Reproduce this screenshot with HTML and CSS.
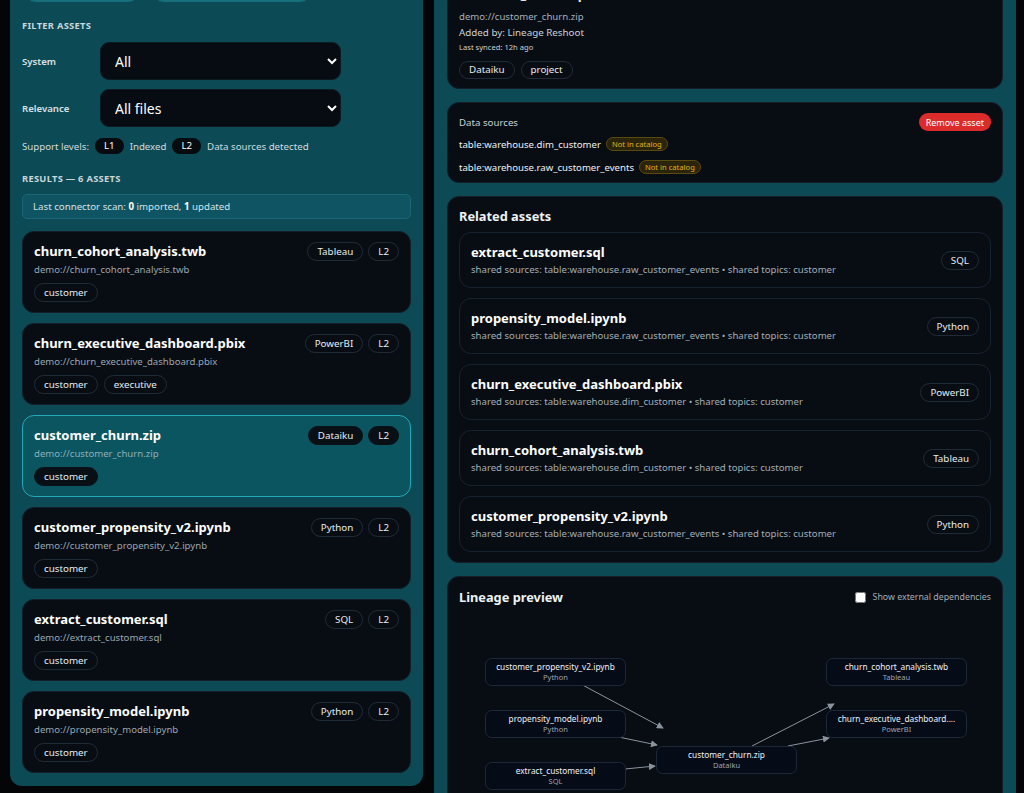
FILE: index.html
```html
<!DOCTYPE html>
<html lang="en">
<head>
  <meta charset="UTF-8">
  <title>Asset catalog</title>
  <link rel="stylesheet" href="styles.css">
</head>
<body>

  <div class="layout">

    <aside class="panel left">
      <div class="actions">
        <button class="pill-btn">Scan connectors</button>
        <button class="pill-btn wide">Import from catalog</button>
      </div>

      <h3 class="section-label">Filter assets</h3>
      <div class="field">
        <label for="system">System</label>
        <select id="system"><option>All</option></select>
      </div>
      <div class="field">
        <label for="relevance">Relevance</label>
        <select id="relevance"><option>All files</option></select>
      </div>
      <div class="levels">
        Support levels: <span class="lvl">L1</span> Indexed <span class="lvl">L2</span> Data sources detected
      </div>

      <h3 class="section-label results">Results — 6 assets</h3>
      <div class="scan-note">Last connector scan: <b>0</b> imported, <b>1</b> updated</div>

      <div class="asset-list">
        <div class="asset">
          <div class="asset-head">
            <span class="asset-name">churn_cohort_analysis.twb</span>
            <span class="badges"><span class="badge">Tableau</span><span class="badge">L2</span></span>
          </div>
          <div class="asset-path">demo://churn_cohort_analysis.twb</div>
          <div class="tags"><span class="tag">customer</span></div>
        </div>
        <div class="asset">
          <div class="asset-head">
            <span class="asset-name">churn_executive_dashboard.pbix</span>
            <span class="badges"><span class="badge">PowerBI</span><span class="badge">L2</span></span>
          </div>
          <div class="asset-path">demo://churn_executive_dashboard.pbix</div>
          <div class="tags"><span class="tag">customer</span><span class="tag">executive</span></div>
        </div>
        <div class="asset selected">
          <div class="asset-head">
            <span class="asset-name">customer_churn.zip</span>
            <span class="badges"><span class="badge">Dataiku</span><span class="badge">L2</span></span>
          </div>
          <div class="asset-path">demo://customer_churn.zip</div>
          <div class="tags"><span class="tag">customer</span></div>
        </div>
        <div class="asset">
          <div class="asset-head">
            <span class="asset-name">customer_propensity_v2.ipynb</span>
            <span class="badges"><span class="badge">Python</span><span class="badge">L2</span></span>
          </div>
          <div class="asset-path">demo://customer_propensity_v2.ipynb</div>
          <div class="tags"><span class="tag">customer</span></div>
        </div>
        <div class="asset">
          <div class="asset-head">
            <span class="asset-name">extract_customer.sql</span>
            <span class="badges"><span class="badge">SQL</span><span class="badge">L2</span></span>
          </div>
          <div class="asset-path">demo://extract_customer.sql</div>
          <div class="tags"><span class="tag">customer</span></div>
        </div>
        <div class="asset">
          <div class="asset-head">
            <span class="asset-name">propensity_model.ipynb</span>
            <span class="badges"><span class="badge">Python</span><span class="badge">L2</span></span>
          </div>
          <div class="asset-path">demo://propensity_model.ipynb</div>
          <div class="tags"><span class="tag">customer</span></div>
        </div>
      </div>
    </aside>

    <main class="panel right">
      <section class="card detail">
        <h2 class="detail-title">customer_churn.zip</h2>
        <div class="detail-path">demo://customer_churn.zip</div>
        <div class="detail-added">Added by: Lineage Reshoot</div>
        <div class="detail-synced">Last synced: 12h ago</div>
        <div class="tags detail-tags"><span class="tag">Dataiku</span><span class="tag">project</span></div>
      </section>

      <section class="card sources">
        <div class="sources-head">
          <span>Data sources</span>
          <button class="danger">Remove asset</button>
        </div>
        <div class="source">table:warehouse.dim_customer <span class="warn">Not in catalog</span></div>
        <div class="source">table:warehouse.raw_customer_events <span class="warn">Not in catalog</span></div>
      </section>

      <section class="card related-card">
        <h3 class="card-title">Related assets</h3>
        <div class="related-list">
          <div class="related">
            <div>
              <div class="related-name">extract_customer.sql</div>
              <div class="related-meta">shared sources: table:warehouse.raw_customer_events • shared topics: customer</div>
            </div>
            <span class="badge">SQL</span>
          </div>
          <div class="related">
            <div>
              <div class="related-name">propensity_model.ipynb</div>
              <div class="related-meta">shared sources: table:warehouse.raw_customer_events • shared topics: customer</div>
            </div>
            <span class="badge">Python</span>
          </div>
          <div class="related">
            <div>
              <div class="related-name">churn_executive_dashboard.pbix</div>
              <div class="related-meta">shared sources: table:warehouse.dim_customer • shared topics: customer</div>
            </div>
            <span class="badge">PowerBI</span>
          </div>
          <div class="related">
            <div>
              <div class="related-name">churn_cohort_analysis.twb</div>
              <div class="related-meta">shared sources: table:warehouse.dim_customer • shared topics: customer</div>
            </div>
            <span class="badge">Tableau</span>
          </div>
          <div class="related">
            <div>
              <div class="related-name">customer_propensity_v2.ipynb</div>
              <div class="related-meta">shared sources: table:warehouse.raw_customer_events • shared topics: customer</div>
            </div>
            <span class="badge">Python</span>
          </div>
        </div>
      </section>

      <section class="card lineage">
        <div class="lineage-head">
          <h3 class="card-title">Lineage preview</h3>
          <label class="check"><input type="checkbox"> Show external dependencies</label>
        </div>
        <svg class="graph" width="534" height="200" viewBox="0 0 534 200">
          <defs>
            <marker id="arrow" viewBox="0 0 8 8" refX="7" refY="4" markerWidth="7" markerHeight="7" orient="auto">
              <path d="M0 0 L8 4 L0 8 z" fill="#8a939e"/>
            </marker>
          </defs>
          <g class="edges">
            <line x1="123.5" y1="70" x2="204" y2="113"/>
            <line x1="159.5" y1="122" x2="198" y2="130"/>
            <line x1="166" y1="154" x2="196" y2="151"/>
            <line x1="293" y1="131" x2="375" y2="89"/>
            <line x1="329" y1="131" x2="370" y2="123"/>
          </g>
          <g class="node">
            <rect x="26.5" y="43.5" width="140" height="27" rx="6"/>
            <text class="n-label" x="96.5" y="55">customer_propensity_v2.ipynb</text>
            <text class="n-sub" x="96.5" y="65">Python</text>
          </g>
          <g class="node">
            <rect x="26.5" y="95.5" width="140" height="27" rx="6"/>
            <text class="n-label" x="96.5" y="107">propensity_model.ipynb</text>
            <text class="n-sub" x="96.5" y="117">Python</text>
          </g>
          <g class="node">
            <rect x="26.5" y="147.5" width="140" height="27" rx="6"/>
            <text class="n-label" x="96.5" y="159">extract_customer.sql</text>
            <text class="n-sub" x="96.5" y="169">SQL</text>
          </g>
          <g class="node">
            <rect x="197.5" y="131.5" width="140" height="27" rx="6"/>
            <text class="n-label" x="267.5" y="143">customer_churn.zip</text>
            <text class="n-sub" x="267.5" y="153">Dataiku</text>
          </g>
          <g class="node">
            <rect x="367.5" y="43.5" width="140" height="27" rx="6"/>
            <text class="n-label" x="437.5" y="55">churn_cohort_analysis.twb</text>
            <text class="n-sub" x="437.5" y="65">Tableau</text>
          </g>
          <g class="node">
            <rect x="367.5" y="95.5" width="140" height="27" rx="6"/>
            <text class="n-label" x="437.5" y="107">churn_executive_dashboard....</text>
            <text class="n-sub" x="437.5" y="117">PowerBI</text>
          </g>
        </svg>
      </section>
    </main>

  </div>

</body>
</html>
```

FILE: styles.css
```css
* { box-sizing: border-box; }
body { margin: 0; background: #030507; color: #eef2f5; font-family: "Noto Sans", "Open Sans", sans-serif; overflow: hidden; }

.layout { display: grid; grid-template-columns: 413px 582px; column-gap: 11px; padding-left: 10px; margin-top: -40px; align-items: start; }
.panel { background: #0c4a55; border-radius: 12px; }
.panel.left { padding: 12px 12px 13px; }
.panel.right { padding: 13px 13px 13px; display: flex; flex-direction: column; gap: 13px; min-height: 900px; }

/* left column */
.actions { display: flex; gap: 8px; }
.pill-btn { height: 30px; width: 120px; border: 0; border-radius: 15px; background: #17707d; color: #fff; font: inherit; font-size: 12px; }
.pill-btn.wide { width: 164px; }

.section-label { margin: 18px 0 0; font-size: 9.3px; line-height: 12px; font-weight: 700; text-transform: uppercase; letter-spacing: 0.3px; color: #c9d6da; }
.section-label.results { margin-top: 19px; }

.field { display: flex; align-items: center; margin-top: 10px; }
.field + .field { margin-top: 9px; }
.field label { width: 78px; font-size: 9.6px; font-weight: 600; color: #d9e3e6; }
.field select { width: 241px; height: 38px; padding: 0 8px 0 10px; border: 1px solid #0e1a22; border-radius: 9px; background: #070c12; color: #fff; font: inherit; font-size: 14px; color-scheme: dark; }

.levels { margin-top: 11px; display: flex; align-items: center; gap: 6px; font-size: 9.7px; color: #cfdbdf; }
.lvl { display: inline-block; height: 16px; line-height: 16px; padding: 0 9px; border-radius: 8px; background: #060b10; color: #fff; }

.scan-note { margin-top: 9px; height: 25px; line-height: 23px; padding: 0 10px; border: 1px solid #1c6676; border-radius: 5px; background: #0f5462; font-size: 9.7px; color: #d6e2e6; }
.scan-note b { color: #fff; }

.asset-list { margin-top: 12px; display: flex; flex-direction: column; gap: 10px; }
.asset { height: 82px; padding: 9px 11px 10px; background: #080d13; border: 1px solid #151e28; border-radius: 12px; }
.asset.selected { background: #0b5561; border-color: #24a8ba; }
.asset-head { display: flex; justify-content: space-between; align-items: center; height: 20px; }
.asset-name { font-size: 13px; font-weight: 700; color: #fff; }
.asset-path { margin-top: 2px; font-size: 9.6px; line-height: 14px; color: #9ba6b0; }
.selected .asset-path { color: #8eaeb5; }

.badges { display: flex; gap: 5px; }
.badge { display: inline-block; height: 19px; line-height: 17px; padding: 0 9px; border: 1px solid #202b38; border-radius: 10px; font-size: 9.8px; color: #e6ecf0; white-space: nowrap; }
.selected .badge, .selected .tag { background: #081016; border-color: #081016; }

.tags { display: flex; gap: 6px; margin-top: 6px; }
.tag { display: inline-block; height: 19px; line-height: 17px; padding: 0 9px; border: 1px solid #202b38; border-radius: 10px; font-size: 9.8px; color: #e6ecf0; }

/* right column */
.card { background: #080d13; border: 1px solid #151e28; border-radius: 12px; padding: 10px 11px; }
.detail { padding-bottom: 9px; }
.detail-title { margin: 0; font-size: 13px; line-height: 20px; font-weight: 700; }
.detail-path { margin-top: 6px; font-size: 9.6px; line-height: 14px; color: #a6b0ba; }
.detail-added { margin-top: 2px; font-size: 9.8px; line-height: 14px; color: #c9d1d8; }
.detail-synced { font-size: 7.6px; line-height: 14px; color: #c9d1d8; }
.detail-tags { margin-top: 7px; }
.detail-tags .tag { height: 18px; line-height: 16px; }

.sources { padding-bottom: 7px; }
.sources-head { display: flex; justify-content: space-between; align-items: center; font-size: 9.7px; color: #c9d1d8; }
.danger { height: 18px; padding: 0 7px; border: 0; border-radius: 9px; background: #dc2b2b; color: #fff; font: inherit; font-size: 9px; }
.source { display: flex; align-items: center; gap: 5px; height: 16px; margin-top: 5px; font-size: 9.6px; color: #eef2f5; }
.source + .source { margin-top: 7px; }
.warn { height: 14px; line-height: 12px; padding: 0 5px; border: 1px solid #5b4a0e; border-radius: 7px; background: #2a250a; color: #e3b217; font-size: 7.6px; }

.card-title { margin: 0; font-size: 12.8px; line-height: 22px; font-weight: 700; }
.related-card { padding-top: 8px; }
.related-list { margin-top: 5px; display: flex; flex-direction: column; gap: 10px; }
.related { height: 56px; display: flex; justify-content: space-between; align-items: center; padding: 0 11px; border: 1px solid #172230; border-radius: 12px; }
.related-name { font-size: 13px; line-height: 18px; font-weight: 700; color: #fff; }
.related-meta { margin-top: 2px; font-size: 9.6px; line-height: 14px; color: #a3adb7; }

.lineage-head { display: flex; justify-content: space-between; align-items: center; height: 20px; }
.check { display: flex; align-items: center; gap: 7px; font-size: 8.8px; color: #a3adb7; }
.check input { margin: 0; width: 11px; height: 11px; }
.graph { display: block; margin-top: 8px; }
.graph .edges line { stroke: #8a939e; stroke-width: 1; marker-end: url(#arrow); }
.graph .node rect { fill: #060b18; stroke: #1d2838; }
.graph text { text-anchor: middle; font-family: "Noto Sans", sans-serif; }
.graph .n-label { font-size: 8.3px; fill: #eef2f5; }
.graph .n-sub { font-size: 7.5px; fill: #9aa4b0; }
```
